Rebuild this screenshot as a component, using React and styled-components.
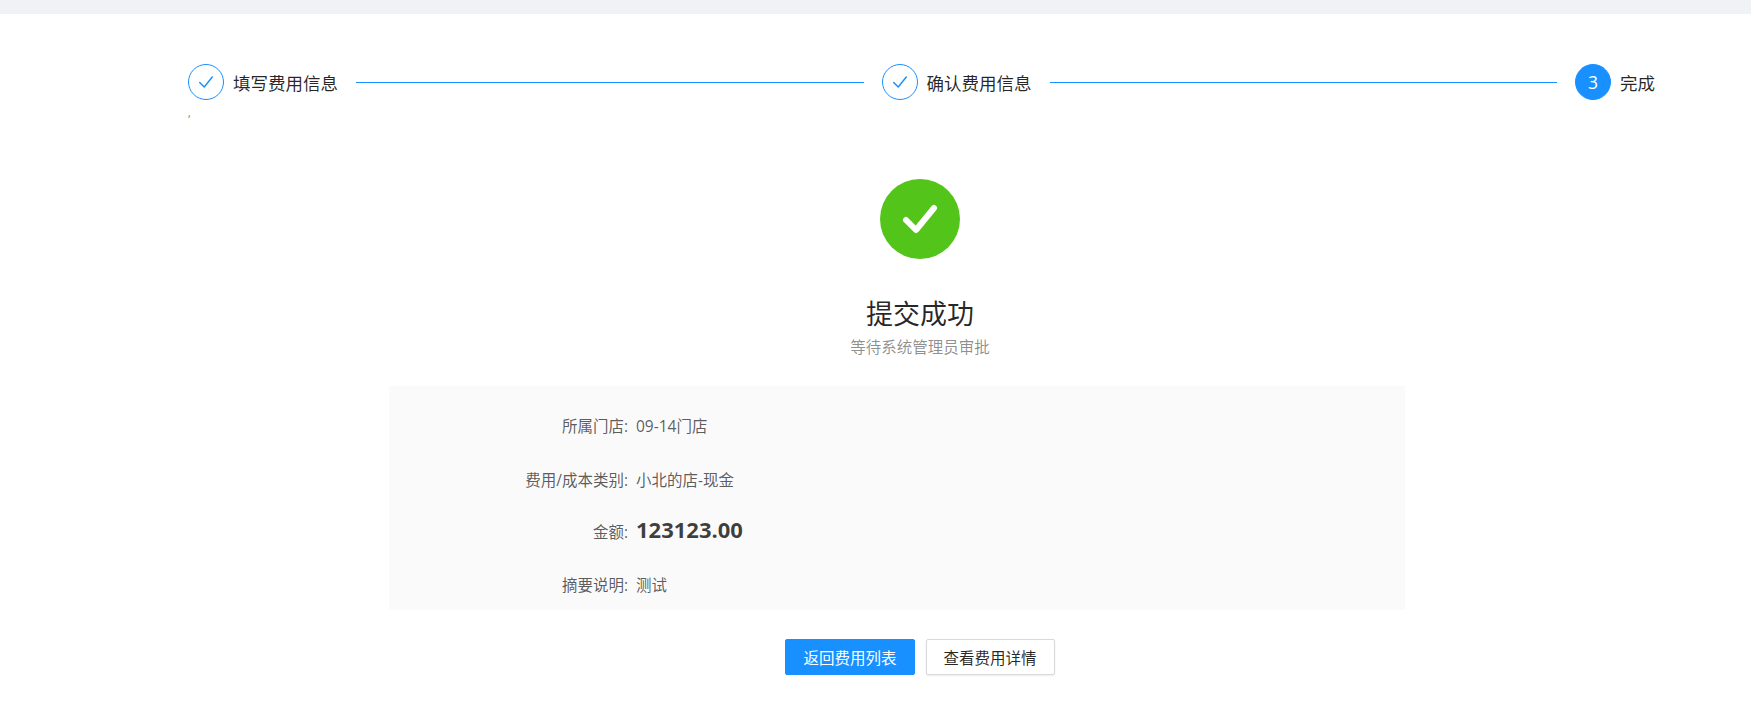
import React from "react";
import styled, { createGlobalStyle } from "styled-components";

const Global = createGlobalStyle`
  body { margin: 0; background: #fff; font-family: "Open Sans", "Noto Sans CJK SC", sans-serif; color: rgba(0,0,0,0.85); }
`;

const TopBar = styled.div`
  height: 14px;
  background: #f0f2f5;
`;

const Steps = styled.div`
  display: flex;
  align-items: center;
  margin: 50px 96px 0 188px;
  height: 36px;
`;

const Step = styled.div`
  display: flex;
  align-items: center;
  gap: 9px;
  font-size: 17.5px;
  color: rgba(0,0,0,0.85);
  white-space: nowrap;
`;

const Dot = styled.div`
  width: 36px;
  height: 36px;
  box-sizing: border-box;
  border-radius: 50%;
  display: flex;
  align-items: center;
  justify-content: center;
  border: 1px solid #1890ff;
  background: ${p => (p.$active ? "#1890ff" : "#fff")};
  color: ${p => (p.$active ? "#fff" : "#1890ff")};
  font-size: 17.5px;
`;

const Line = styled.div`
  flex: 1;
  height: 1px;
  background: #1890ff;
  margin: 0 18px;
`;

const Mark = styled.div`
  margin: 8px 0 0 188px;
  height: 10px;
  font-size: 10px;
  line-height: 10px;
  color: #666;
`;

const Result = styled.div`
  margin: 61px 0 40px 389px;
  width: 1062px;
  display: flex;
  flex-direction: column;
  align-items: center;
`;

const Icon = styled.div`
  width: 80px;
  height: 80px;
  border-radius: 50%;
  background: #52c41a;
  display: flex;
  align-items: center;
  justify-content: center;
`;

const Title = styled.div`
  margin-top: 37px;
  font-size: 27px;
  line-height: 36px;
  color: rgba(0,0,0,0.85);
`;

const Sub = styled.div`
  margin-top: 3px;
  font-size: 15.5px;
  line-height: 24px;
  color: rgba(0,0,0,0.45);
`;

const Box = styled.div`
  align-self: flex-start;
  width: 1016px;
  margin-top: 27px;
  background: #fafafa;
  padding: 28px 0 12px;
  box-sizing: border-box;
`;

const Row = styled.div`
  display: flex;
  align-items: baseline;
  height: ${p => p.$h}px;
  font-size: 15.5px;
`;

const Label = styled.div`
  width: 239px;
  text-align: right;
  color: rgba(0,0,0,0.65);
`;

const Value = styled.div`
  padding-left: 8px;
  color: rgba(0,0,0,0.65);
  font-size: ${p => (p.$big ? "22px" : "15.5px")};
  font-weight: ${p => (p.$big ? 700 : 400)};
  ${p => p.$big && "color: rgba(0,0,0,0.75);"}
`;

const Buttons = styled.div`
  display: flex;
  gap: 11px;
  margin-top: 29px;
`;

const Button = styled.button`
  height: 36px;
  padding: 0 17px;
  font-size: 15.5px;
  font-family: inherit;
  border-radius: 2px;
  border: 1px solid ${p => (p.$primary ? "#1890ff" : "#d9d9d9")};
  background: ${p => (p.$primary ? "#1890ff" : "#fff")};
  color: ${p => (p.$primary ? "#fff" : "rgba(0,0,0,0.85)")};
  box-shadow: ${p => (p.$primary ? "none" : "0 1px 2px rgba(0,0,0,0.08)")};
`;

const Check = ({ size = 18, color = "#1890ff", width = 1.6 }) => (
  <svg width={size} height={size} viewBox="0 0 20 20" fill="none">
    <path d="M3 10.5 L8 15.5 L17 4.5" stroke={color} strokeWidth={width} strokeLinecap="round" strokeLinejoin="round" />
  </svg>
);

const rows = [
  { label: "所属门店:", value: "09-14门店", h: 54 },
  { label: "费用/成本类别:", value: "小北的店-现金", h: 45.5 },
  { label: "金额:", value: "123123.00", h: 59.5, big: true },
  { label: "摘要说明:", value: "测试", h: 25 },
];

export default function App() {
  return (
    <>
      <Global />
      <TopBar />
      <Steps>
        <Step><Dot><Check /></Dot>填写费用信息</Step>
        <Line />
        <Step><Dot><Check /></Dot>确认费用信息</Step>
        <Line />
        <Step><Dot $active>3</Dot>完成</Step>
      </Steps>
      <Mark>,</Mark>
      <Result>
        <Icon><Check size={40} color="#fff" width={3} /></Icon>
        <Title>提交成功</Title>
        <Sub>等待系统管理员审批</Sub>
        <Box>
          {rows.map(r => (
            <Row key={r.label} $h={r.h}>
              <Label>{r.label}</Label>
              <Value $big={r.big}>{r.value}</Value>
            </Row>
          ))}
        </Box>
        <Buttons>
          <Button $primary>返回费用列表</Button>
          <Button>查看费用详情</Button>
        </Buttons>
      </Result>
    </>
  );
}
